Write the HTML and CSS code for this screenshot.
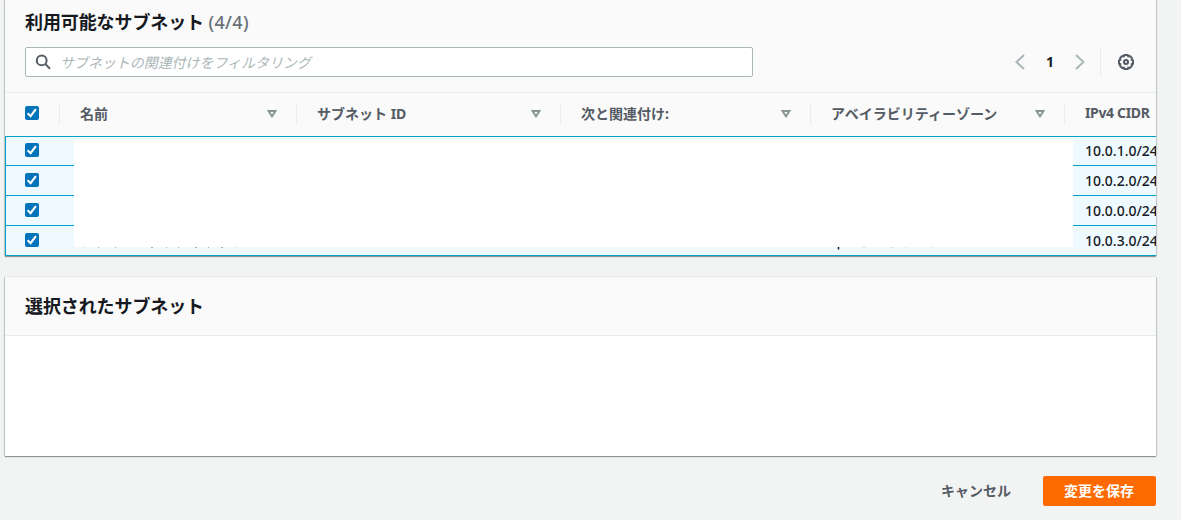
FILE: index.html
```html
<!DOCTYPE html>
<html lang="ja">
<head>
    <meta charset="UTF-8">
    <meta name="viewport" content="width=device-width, initial-scale=1.0">
    <title>サブネットの関連付けを編集</title>
    <link rel="stylesheet" href="styles.css">
</head>
<body>
    <svg width="0" height="0" class="defs">
        <symbol id="check" viewBox="0 0 14 14">
            <path d="M2.6 7.2 5.6 10.2 10.9 3.2" fill="none" stroke="#fff" stroke-width="2.2"/>
        </symbol>
        <symbol id="sort" viewBox="0 0 10 8">
            <path d="M1.5 1h7L5 6.3z" fill="none" stroke="#879596" stroke-width="2"/>
        </symbol>
    </svg>

    <!-- Available subnets -->
    <section class="panel available">
        <div class="panel-header">
            <h2>利用可能なサブネット <span class="counter">(4/4)</span></h2>
            <div class="tools">
                <div class="search">
                    <svg class="search-icon" viewBox="0 0 16 16"><circle cx="6.7" cy="6.4" r="4.9"/><path d="M10.2 9.9 15 14.7"/></svg>
                    <span class="placeholder">サブネットの関連付けをフィルタリング</span>
                </div>
                <div class="pagination">
                    <svg class="arrow" viewBox="0 0 10 16"><path d="M9 1 1.5 8 9 15"/></svg>
                    <span class="page">1</span>
                    <svg class="arrow" viewBox="0 0 10 16"><path d="M1 1 8.5 8 1 15"/></svg>
                </div>
                <div class="settings">
                    <svg class="gear" viewBox="0 0 16 16">
                        <path d="M6.3 1h3.4l.5 1.3 1.7-.2 2 2-.2 1.7 1.3.5v3.4l-1.3.5.2 1.7-2 2-1.7-.2-.5 1.3H6.3l-.5-1.3-1.7.2-2-2 .2-1.7L1 9.7V6.3l1.3-.5-.2-1.7 2-2 1.7.2z"/>
                        <circle cx="8" cy="8" r="2"/>
                    </svg>
                </div>
            </div>
        </div>

        <div class="row head">
            <div class="cell select"><span class="checkbox"><svg><use href="#check"/></svg></span></div>
            <div class="cell name"><span>名前</span> <svg class="sort"><use href="#sort"/></svg></div>
            <div class="cell subnet"><span>サブネット ID</span> <svg class="sort"><use href="#sort"/></svg></div>
            <div class="cell assoc"><span>次と関連付け:</span> <svg class="sort"><use href="#sort"/></svg></div>
            <div class="cell zone"><span>アベイラビリティーゾーン</span> <svg class="sort"><use href="#sort"/></svg></div>
            <div class="cell cidr"><span>IPv4 CIDR</span></div>
        </div>
        <div class="rows">
            <div class="row item">
                <div class="cell select"><span class="checkbox"><svg><use href="#check"/></svg></span></div>
                <div class="cell cidr">10.0.1.0/24</div>
            </div>
            <div class="row item">
                <div class="cell select"><span class="checkbox"><svg><use href="#check"/></svg></span></div>
                <div class="cell cidr">10.0.2.0/24</div>
            </div>
            <div class="row item">
                <div class="cell select"><span class="checkbox"><svg><use href="#check"/></svg></span></div>
                <div class="cell cidr">10.0.0.0/24</div>
            </div>
            <div class="row item">
                <div class="cell select"><span class="checkbox"><svg><use href="#check"/></svg></span></div>
                <div class="cell cidr">10.0.3.0/24</div>
            </div>
            <div class="cover">
                <!-- bottoms of the covered letters -->
                <svg class="traces" viewBox="0 0 999 3">
                    <path d="M24 .5h1m16 0h1m35 0h2m13 0h1m11 0h1m16 0h2m11 0h1m12 0h2" stroke="#a9b0b5"/>
                    <path d="M764.5 0v2.5" stroke="#16191f" stroke-width="1.5"/>
                    <path d="M9 .5h1m152 0h1m626 0h2m26 0h2m12 0h1m26 0h1" stroke="#d5dbdb"/>
                </svg>
            </div>
        </div>
    </section>

    <!-- Selected subnets -->
    <section class="panel selected">
        <div class="panel-header">
            <h2>選択されたサブネット</h2>
        </div>
    </section>

    <div class="actions">
        <button class="btn link">キャンセル</button>
        <button class="btn primary">変更を保存</button>
    </div>
</body>
</html>
```
FILE: styles.css
```css
* {
    margin: 0;
    padding: 0;
    box-sizing: border-box;
}

body {
    width: 1181px;
    height: 520px;
    overflow: hidden;
    padding: 0 25px 0 5px;
    background: #f2f3f3;
    color: #16191f;
    font-family: "Noto Sans", "Noto Sans CJK JP", sans-serif;
    font-size: 14px;
}

.defs {
    position: absolute;
}

.panel {
    background: #fff;
    box-shadow: 0 1px 1px 0 rgba(0, 28, 36, 0.4), 1px 0 1px 0 rgba(0, 28, 36, 0.15), -1px 0 1px 0 rgba(0, 28, 36, 0.15);
}

.panel-header {
    background: #fafafa;
    border-bottom: 1px solid #eaeded;
    padding: 0 20px;
}

h2 {
    font-size: 18px;
    line-height: 22px;
    font-weight: 700;
    letter-spacing: -0.1px;
}

.counter {
    color: #687078;
    font-weight: 500;
    letter-spacing: 0.3px;
}

.available {
    height: 256px;
}

.available .panel-header {
    height: 93px;
    padding-top: 11px;
}

.tools {
    display: flex;
    align-items: center;
    margin-top: 14px;
    padding-right: 1px;
}

.search {
    display: flex;
    align-items: center;
    width: 728px;
    height: 30px;
    padding-left: 9px;
    border: 1px solid #aab7b8;
    border-radius: 2px;
    background: #fff;
}

.search-icon {
    width: 16px;
    height: 16px;
    margin-right: 9px;
    fill: none;
    stroke: #545b64;
    stroke-width: 2;
}

.placeholder {
    color: #aab7b8;
    font-style: italic;
    letter-spacing: -0.05px;
}

.pagination {
    display: flex;
    align-items: center;
    justify-content: space-between;
    width: 70px;
    margin-left: auto;
    margin-right: 15px;
}

.arrow {
    width: 10px;
    height: 16px;
    fill: none;
    stroke: #aab7b8;
    stroke-width: 2;
}

.page {
    margin-top: -2px;
    font-weight: 700;
}

.settings {
    display: flex;
    align-items: center;
    height: 30px;
    padding-left: 17px;
    margin-right: 1px;
    border-left: 1px solid #eaeded;
}

.gear {
    width: 16px;
    height: 16px;
    fill: none;
    stroke: #545b64;
    stroke-width: 2;
}

.row {
    display: flex;
    align-items: center;
    overflow: hidden;
}

.head {
    height: 43px;
    background: #fafafa;
    color: #545b64;
    font-weight: 700;
}

.cell {
    display: flex;
    align-items: center;
    flex: none;
    white-space: nowrap;
}

.head .cell {
    justify-content: space-between;
    height: 21px;
    padding: 0 19px 0 20px;
    border-right: 1px solid #eaeded;
}

.head .cell > span {
    margin-top: -4px;
}

.head .select {
    width: 55px;
}

.name {
    width: 237px;
}

.subnet {
    width: 264px;
}

.assoc {
    width: 250px;
}

.zone {
    width: 254px;
}

.head .cidr {
    padding-right: 0;
    border-right: 0;
    letter-spacing: -0.35px;
}

.sort {
    width: 10px;
    height: 8px;
    margin-top: -1px;
}

.checkbox {
    display: block;
    width: 14px;
    height: 14px;
    border-radius: 2px;
    background: #0073bb;
}

.checkbox svg {
    display: block;
    width: 14px;
    height: 14px;
}

.item .checkbox {
    margin-top: -2px;
}

.rows {
    position: relative;
    border-top: 1px solid #00a1c9;
}

.item {
    justify-content: space-between;
    height: 30px;
    padding-left: 19px;
    border-left: 1px solid #00a1c9;
    border-bottom: 1px solid #00a1c9;
    background: #eefaff;
}

.item:first-child {
    height: 29px;
}

.item .cidr {
    width: 71px;
    font-weight: 500;
}

.item:first-child .cidr {
    margin-top: -1px;
}

/* White block over the hidden columns */
.cover {
    position: absolute;
    left: 69px;
    top: 3px;
    width: 999px;
    height: 107px;
    background: #fff;
}

.traces {
    display: block;
    width: 999px;
    height: 3px;
    margin-top: 107px;
}

.selected {
    height: 179px;
    margin-top: 21px;
}

.selected .panel-header {
    height: 59px;
    padding-top: 18px;
}

.actions {
    display: flex;
    justify-content: flex-end;
    margin-top: 20px;
}

.btn {
    height: 30px;
    padding-bottom: 2px;
    border: 0;
    border-radius: 2px;
    background: none;
    color: #545b64;
    font-family: inherit;
    font-size: 14px;
    font-weight: 700;
}

.link {
    margin-right: 32px;
}

.primary {
    width: 113px;
    padding-right: 1px;
    background: #ff6a00;
    color: #fff;
}
```
